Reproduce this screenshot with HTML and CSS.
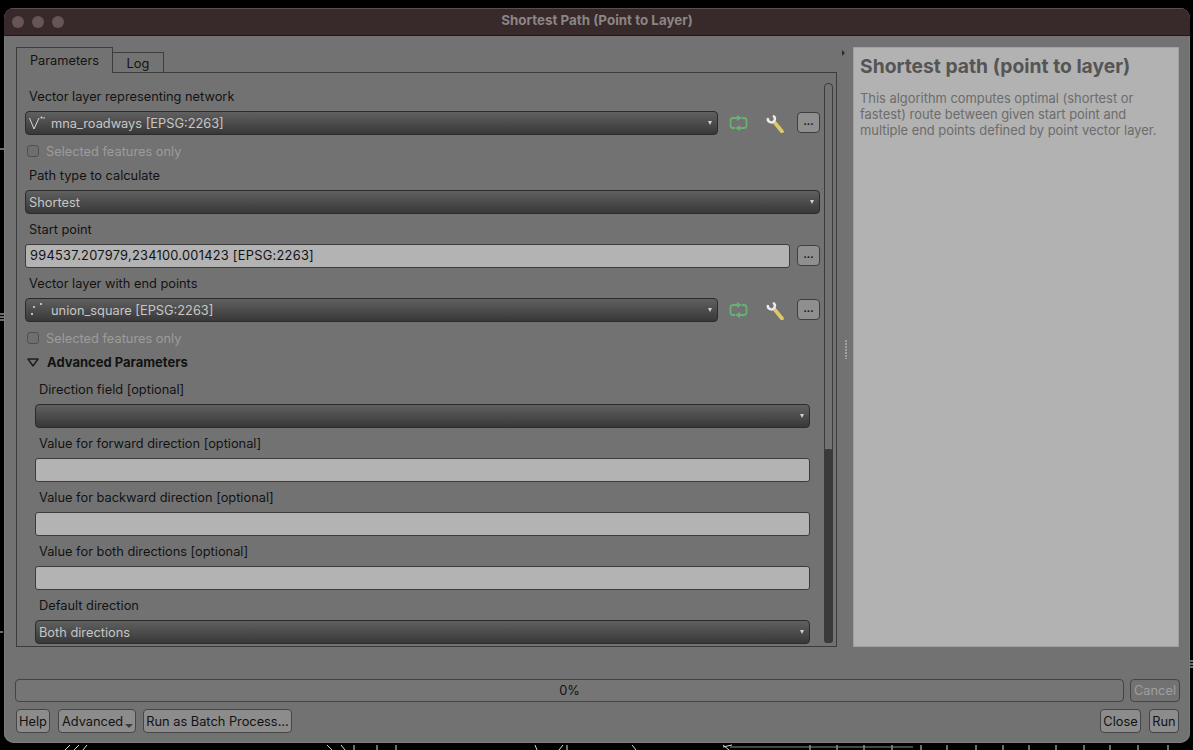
FILE: index.html
```html
<!DOCTYPE html>
<html lang="en">
<head>
<meta charset="utf-8">
<title>Shortest Path (Point to Layer)</title>
<link rel="stylesheet" href="styles.css">
</head>
<body>
<svg class="backdrop" width="1193" height="750" viewBox="0 0 1193 750" aria-hidden="true">
  <g stroke="#d8d8d8" stroke-width="1" fill="none">
    <path d="M0 149H4M0 314H4M0 317H4M0 320H4M0 632H3M1190 661H1193M1190 664H1193M1190 667H1193"/>
    <path d="M70 745L65 750M79 745L74 750M87 745L83 750M327 745L332 750M341 745L345 750M354 745V750M377 745V750M396 745V750M535 745L537 750M563 745L559 750M567 745V750M632 745L636 750"/>
    <path d="M723 745L729 750M723 747L732 745M810 745V750M837 745V750M864 745V750M892 745V750M921 745V750M947 745V750M976 745V750M1003 745V750M1029 745V750M1056 745V750M1084 745V750M1110 745V750M1138 745V750M1168 745V750"/>
    <path d="M730 747H913" stroke="#8c8c8c"/>
  </g>
</svg>
<main class="window">
  <header class="titlebar">
    <span class="light"></span><span class="light"></span><span class="light"></span>
    <h1 class="window-title">Shortest Path (Point to Layer)</h1>
  </header>
  <div class="body">
    <div class="main">
      <section class="left">
        <div class="tabs">
          <div class="tab tab-active">Parameters</div>
          <div class="tab">Log</div>
        </div>
        <div class="pane">
          <div class="form">
            <div class="label">Vector layer representing network</div>
            <div class="row">
              <div class="combo">
                <svg class="layer-icon" width="18" height="16" viewBox="0 0 18 16"><path d="M0.500 3L5 14L10 3" fill="none" stroke="#d8d8d8" stroke-width="1"/><circle cx="12.500" cy="2.500" r="1" fill="#e0e0e0"/><circle cx="15" cy="3" r=".8" fill="#e0e0e0"/></svg>
                <span>mna_roadways [EPSG:2263]</span><i class="caret"></i>
              </div>
              <div class="tool tool-loop">
                <svg width="19" height="16" viewBox="0 0 19 16"><g fill="none" stroke="#66b273" stroke-width="1.800"><path d="M8 3H4Q1.500 3 1.500 5.500V10.500Q1.500 13 4 13H6"/><path d="M11 13H15Q17.500 13 17.500 10.500V5.500Q17.500 3 15 3H13"/></g><path d="M8 0L13 3L8 6ZM11 10L6 13L11 16Z" fill="#66b273"/></svg>
              </div>
              <div class="tool tool-wrench">
                <svg width="20" height="20" viewBox="0 0 20 20"><path d="M3 5A3.500 3.500 0 1 0 8 2.800" fill="none" stroke="#ececec" stroke-width="2.400"/><path d="M8.500 8L11 11" stroke="#ececec" stroke-width="3"/><path d="M10.500 10.500L17 18.500" stroke="#dcc96a" stroke-width="3.600" stroke-linecap="round"/></svg>
              </div>
              <div class="more">...</div>
            </div>
            <label class="check"><span class="box"></span>Selected features only</label>
            <div class="label">Path type to calculate</div>
            <div class="combo"><span class="plain">Shortest</span><i class="caret"></i></div>
            <div class="label">Start point</div>
            <div class="row row-gap">
              <div class="input input-num">994537.207979,234100.001423 [EPSG:2263]</div>
              <div class="more">...</div>
            </div>
            <div class="label">Vector layer with end points</div>
            <div class="row">
              <div class="combo">
                <svg class="layer-icon" width="18" height="16" viewBox="0 0 18 16"><circle cx="3" cy="12" r="1.100" fill="#e0e0e0"/><circle cx="5" cy="5" r="1" fill="#e0e0e0"/><circle cx="12" cy="2" r="1" fill="#e0e0e0"/></svg>
                <span>union_square [EPSG:2263]</span><i class="caret"></i>
              </div>
              <div class="tool tool-loop">
                <svg width="19" height="16" viewBox="0 0 19 16"><g fill="none" stroke="#66b273" stroke-width="1.800"><path d="M8 3H4Q1.500 3 1.500 5.500V10.500Q1.500 13 4 13H6"/><path d="M11 13H15Q17.500 13 17.500 10.500V5.500Q17.500 3 15 3H13"/></g><path d="M8 0L13 3L8 6ZM11 10L6 13L11 16Z" fill="#66b273"/></svg>
              </div>
              <div class="tool tool-wrench">
                <svg width="20" height="20" viewBox="0 0 20 20"><path d="M3 5A3.500 3.500 0 1 0 8 2.800" fill="none" stroke="#ececec" stroke-width="2.400"/><path d="M8.500 8L11 11" stroke="#ececec" stroke-width="3"/><path d="M10.500 10.500L17 18.500" stroke="#dcc96a" stroke-width="3.600" stroke-linecap="round"/></svg>
              </div>
              <div class="more">...</div>
            </div>
            <label class="check"><span class="box"></span>Selected features only</label>
            <div class="adv-head"><svg width="12" height="9" viewBox="0 0 12 9"><path d="M1 1H11L6 8Z" fill="none" stroke="#1f1f1f" stroke-width="1.500" stroke-linejoin="round"/></svg>Advanced Parameters</div>
            <div class="adv">
              <div class="label">Direction field [optional]</div>
              <div class="combo"><i class="caret"></i></div>
              <div class="label">Value for forward direction [optional]</div>
              <div class="input"></div>
              <div class="label">Value for backward direction [optional]</div>
              <div class="input"></div>
              <div class="label">Value for both directions [optional]</div>
              <div class="input"></div>
              <div class="label">Default direction</div>
              <div class="combo"><span class="plain">Both directions</span><i class="caret"></i></div>
            </div>
          </div>
          <div class="scrollbar"><div class="thumb"></div></div>
        </div>
      </section>
      <div class="splitter"><i class="split-arrow"></i><i class="split-dots"></i></div>
      <aside class="help">
        <h2 class="help-title">Shortest path (point to layer)</h2>
        <p class="help-text">This algorithm computes optimal (shortest or fastest) route between given start point and multiple end points defined by point vector layer.</p>
      </aside>
    </div>
    <div class="progress-row">
      <div class="progress">0%</div>
      <div class="btn btn-cancel">Cancel</div>
    </div>
    <div class="button-row">
      <div class="btn btn-help">Help</div>
      <div class="btn btn-adv">Advanced<i class="menu-caret"></i></div>
      <div class="btn btn-batch">Run as Batch Process...</div>
      <div class="spacer"></div>
      <div class="btn btn-close">Close</div>
      <div class="btn btn-run">Run</div>
    </div>
  </div>
</main>
</body>
</html>
```
FILE: styles.css
```css
* { box-sizing: border-box; }
html, body { margin: 0; height: 100%; }
body {
  background: #000;
  font-family: "Inter", "Liberation Sans", sans-serif;
  font-size: 12.8px;
  color: #121212;
  overflow: hidden;
}
.backdrop { position: absolute; left: 0; top: 0; }
.window {
  position: relative;
  width: 1186px;
  height: 735px;
  margin: 8px 0 0 4px;
  border-radius: 10px;
  background: #727272;
  overflow: hidden;
  display: flex;
  flex-direction: column;
  box-shadow: inset 0 0 0 1px #7d7d7d;
}
.titlebar {
  height: 28px;
  flex: none;
  background: #38292a;
  border-bottom: 1px solid #1d1a1a;
  border-top: 1px solid #5a5050;
  display: flex;
  align-items: center;
  gap: 8px;
  padding-left: 8px;
  position: relative;
}
.light { width: 12px; height: 12px; border-radius: 50%; background: #685555; }
.window-title {
  position: absolute;
  inset: 0;
  margin: 0;
  text-align: center;
  font-size: 13.4px;
  line-height: 23px;
  font-weight: 700;
  color: #8b8585;
}
.body { flex: 1; padding: 11px 11px 0 12px; display: flex; flex-direction: column; }
.main { height: 600px; display: flex; flex: none; }
.left { width: 821px; display: flex; flex-direction: column; }
.tabs { display: flex; align-items: flex-end; height: 26px; margin-bottom: -1px; position: relative; }
.tab {
  height: 21px;
  width: 51px;
  border: 1px solid #3c3c3c;
  border-left: 0;
  text-align: center;
  line-height: 21px;
  background: #737373;
}
.tab-active {
  width: 97px;
  height: 26px;
  line-height: 26px;
  border-left: 1px solid #3c3c3c;
  border-bottom: 0;
  background: #727272;
}
.pane {
  flex: 1;
  min-height: 0;
  border: 1px solid #3c3c3c;
  display: flex;
}
.form {
  flex: 1;
  min-width: 0;
  padding: 15px 0 0 8px;
  display: flex;
  flex-direction: column;
  gap: 7px;
  overflow: hidden;
}
.label { height: 16px; line-height: 18px; white-space: nowrap; padding-left: 4px; flex: none; }
.row { display: flex; height: 24px; flex: none; }
.row-gap { gap: 7px; }
.combo {
  flex: 1 0 24px;
  min-height: 24px;
  height: 24px;
  position: relative;
  display: flex;
  align-items: center;
  border: 1px solid #2b2b2b;
  border-radius: 4px;
  background: linear-gradient(#606060, #383838);
  color: #c6c6c6;
  white-space: nowrap;
}
.form > .combo, .adv > .combo { flex: none; }
.plain { padding-left: 3px; }
.layer-icon { margin: 0 4px 0 3px; flex: none; }
.caret {
  position: absolute;
  right: 5px;
  top: 9px;
  width: 0;
  height: 0;
  border-left: 2px solid transparent;
  border-right: 2px solid transparent;
  border-top: 4px solid #d2d2d2;
}
.tool { flex: none; display: flex; align-items: center; justify-content: center; }
.tool-loop { width: 41px; }
.tool-wrench { width: 31px; margin-right: 7px; }
.more {
  flex: none;
  width: 23px;
  height: 21px;
  margin-top: 1px;
  border: 1px solid #3f3f3f;
  border-radius: 4px;
  background: #8f8f8f;
  text-align: center;
  line-height: 16px;
  font-size: 10px;
  font-weight: 700;
}
.check {
  height: 16px;
  margin: 1px 0;
  display: flex;
  align-items: center;
  gap: 7px;
  color: #9c9c9c;
  padding-left: 2px;
  flex: none;
}
.box {
  width: 12px;
  height: 12px;
  border: 1px solid #505050;
  border-radius: 3px;
  background: #6e6e6e;
}
.input {
  flex: 1 0 24px;
  height: 24px;
  min-height: 24px;
  border: 1px solid #3c3c3c;
  border-radius: 3px;
  background: #b3b3b3;
  padding-left: 4px;
  line-height: 22px;
  white-space: nowrap;
}
.input-num { letter-spacing: .28px; }
.adv > .input { flex: none; }
.adv-head {
  height: 16px;
  display: flex;
  align-items: center;
  gap: 8px;
  padding-left: 2px;
  font-size: 13px;
  font-weight: 700;
  flex: none;
}
.adv {
  padding: 4px 0 0 10px;
  margin-right: 10px;
  display: flex;
  flex-direction: column;
  gap: 7px;
  flex: none;
}
.scrollbar {
  flex: none;
  width: 9px;
  margin: 10px 3px 3px 4px;
  border: 1px solid #3c3c3c;
  border-radius: 4px;
  display: flex;
  flex-direction: column;
  justify-content: flex-end;
}
.thumb { height: 194px; background: #3a3a3a; border-radius: 3px; margin: -1px; }
.splitter { width: 16px; position: relative; flex: none; }
.split-arrow {
  position: absolute;
  left: 5px;
  top: 3px;
  border-top: 3px solid transparent;
  border-bottom: 3px solid transparent;
  border-left: 3px solid #2c2c2c;
}
.split-dots {
  position: absolute;
  left: 8px;
  top: 293px;
  width: 2px;
  height: 19px;
  background: repeating-linear-gradient(#a2a2a2 0 2px, transparent 2px 3px);
}
.help {
  width: 326px;
  flex: none;
  background: #b2b2b2;
  border: 1px solid #a0a0a0;
  padding: 6px 14px 6px 6px;
  color: #6c6c6c;
}
.help-title { margin: 0 0 13px; font-size: 19.3px; line-height: 24px; font-weight: 700; color: #555; white-space: nowrap; }
.help-text { margin: 0; line-height: 16px; font-size: 12.9px; }
.progress-row { display: flex; gap: 6px; margin: 32px -1px 0; height: 23px; flex: none; }
.progress {
  flex: 1;
  border: 1px solid #444;
  border-radius: 4px;
  background: #757575;
  text-align: center;
  line-height: 21px;
}
.btn {
  border: 1px solid #454545;
  border-radius: 4px;
  background: #8c8c8c;
  text-align: center;
  line-height: 23px;
  white-space: nowrap;
  position: relative;
}
.btn-cancel { width: 50px; color: #9f9f9f; background: #727272; line-height: 21px; }
.button-row { display: flex; height: 24px; margin-top: 7px; flex: none; }
.btn-help { width: 34px; margin-right: 8px; }
.btn-adv { width: 78px; margin-right: 7px; text-align: left; padding-left: 3px; }
.btn-batch { width: 149px; }
.spacer { flex: 1; }
.btn-close { width: 41px; margin-right: 8px; }
.btn-run { width: 30px; }
.menu-caret {
  position: absolute;
  right: 2px;
  top: 14px;
  border-left: 4px solid transparent;
  border-right: 4px solid transparent;
  border-top: 4px solid #3c3c3c;
}
```
